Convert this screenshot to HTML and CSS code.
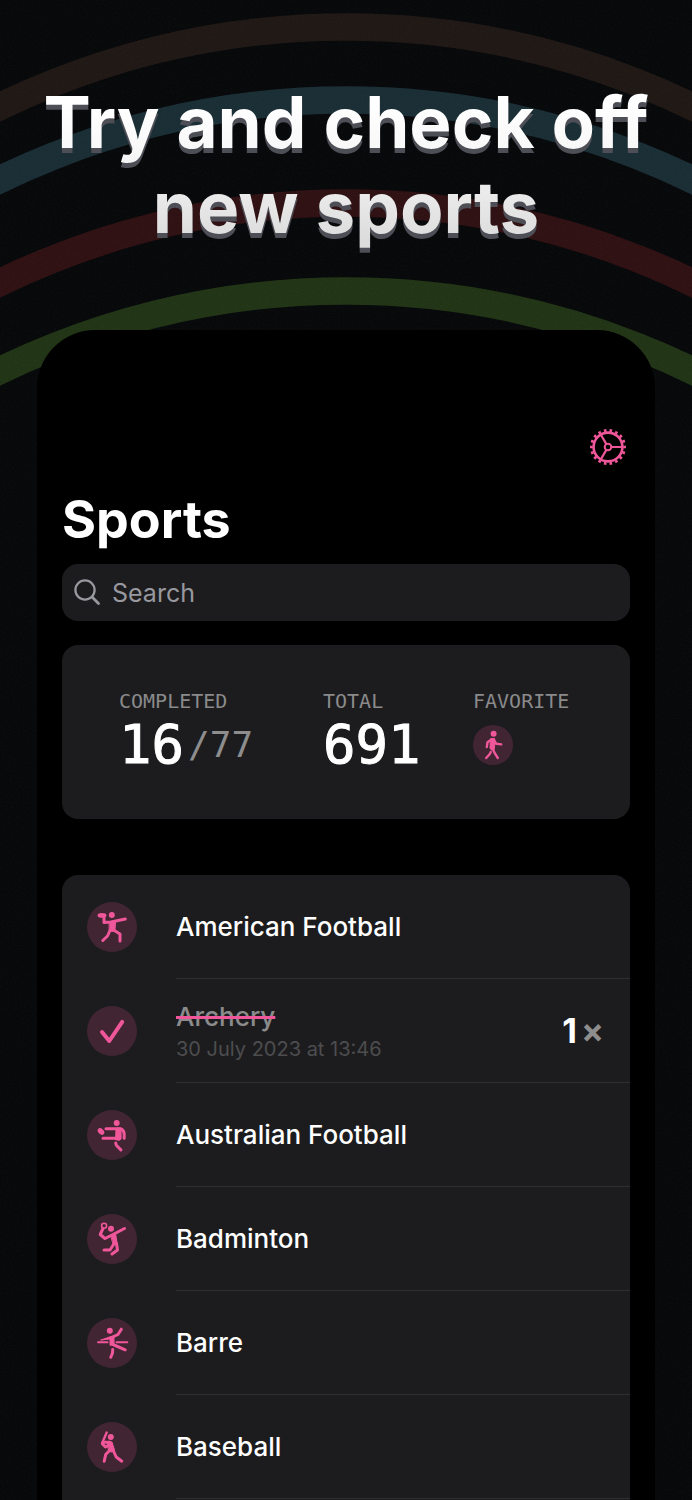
FILE: index.html
```html
<!DOCTYPE html>
<html lang="en">
<head>
<meta charset="utf-8">
<meta name="viewport" content="width=device-width, initial-scale=1">
<title>Sports</title>
<link rel="stylesheet" href="styles.css">
</head>
<body>
<div class="page">
  <svg class="arcs" viewBox="0 0 692 400" aria-hidden="true">
    <g fill="none" stroke-width="27.5">
      <circle cx="346" cy="820" r="793" stroke="#1e1613"/>
      <circle cx="346" cy="893" r="793" stroke="#182c33"/>
      <circle cx="346" cy="996" r="793" stroke="#2e0f11"/>
      <circle cx="346" cy="1084" r="793" stroke="#1f3314"/>
    </g>
  </svg>
  <svg class="grain" aria-hidden="true">
    <filter id="grain"><feTurbulence type="fractalNoise" baseFrequency="0.6" numOctaves="2"/><feColorMatrix type="saturate" values="0"/></filter>
    <rect width="100%" height="100%" filter="url(#grain)"/>
  </svg>

  <h1 class="headline">Try and check off<br>new sports</h1>

  <main class="phone">
    <div class="toolbar">
      <button class="gear" type="button" aria-label="Settings">
        <svg viewBox="0 0 36 36" fill="none" stroke="currentColor">
          <circle cx="18" cy="18" r="14.4" stroke-width="2.6"/>
          <circle cx="18" cy="18" r="16.6" stroke-width="2.8" pathLength="180" stroke-dasharray="4.6 5.4" stroke-dashoffset="2.3"/>
          <circle cx="18" cy="18" r="3.3" stroke-width="2"/>
          <path stroke-width="2.2" d="M21.5 18H33M16.2 14.9 10.6 5.2M16.2 21.1 10.6 30.8"/>
        </svg>
      </button>
    </div>
    <h2 class="title">Sports</h2>

    <label class="search">
      <svg viewBox="0 0 28 28" fill="none" stroke="currentColor" stroke-linecap="round" aria-hidden="true">
        <circle cx="11" cy="11" r="9.6" stroke-width="2.3"/>
        <path d="m18.3 18.3 6.2 6.2" stroke-width="2.8"/>
      </svg>
      <input type="search" placeholder="Search" aria-label="Search">
    </label>

    <dl class="stats">
      <div class="stat">
        <dt>COMPLETED</dt>
        <dd>16<small>/77</small></dd>
      </div>
      <div class="stat">
        <dt>TOTAL</dt>
        <dd>691</dd>
      </div>
      <div class="stat">
        <dt>FAVORITE</dt>
        <dd>
          <svg class="badge badge-small" viewBox="0 0 40 40" role="img" aria-label="Walking">
            <circle class="disc" cx="20" cy="20" r="20"/>
            <g class="limbs limbs-small">
              <circle class="solid" cx="20.6" cy="8.7" r="3"/>
              <path d="M18.5 14.5 14.5 17.3 13.8 22M21 15l2.3 3.8 5 .6M20 24l1.3 3.3L24.8 33M17.8 27l-1 2L13.2 33"/>
              <path class="solid" d="M18 13.5h3.6l.4 4-.7 6.5-2.2 1.5-2.1-2 .2-5z" stroke-width="1"/>
            </g>
          </svg>
        </dd>
      </div>
    </dl>

    <ul class="list">
      <li class="row">
        <svg class="badge" viewBox="0 0 50 50" aria-hidden="true">
          <circle class="disc" cx="25" cy="25" r="25"/>
          <g class="limbs">
            <circle class="solid" cx="24.8" cy="13.1" r="3"/>
            <ellipse class="solid" cx="15" cy="13.4" rx="4.4" ry="2.4"/>
            <path d="M17 15.5V20.5L24 20 38.3 17M23 28.5 20.5 34 15.8 38.5M26.5 28 33 32V39"/>
            <path class="solid" d="M22.5 20h6l-.5 7.5-2 2-3.5-.5z" stroke-width="1"/>
          </g>
        </svg>
        <div class="cell"><span class="name">American Football</span></div>
      </li>
      <li class="row">
        <svg class="badge" viewBox="0 0 50 50" role="img" aria-label="Done">
          <circle class="disc" cx="25" cy="25" r="25"/>
          <path class="tick" d="M15 26 22.3 35 35.2 15.8"/>
        </svg>
        <div class="cell">
          <div class="text"><del class="name">Archery</del><time class="date" datetime="2023-07-30T13:46">30 July 2023 at 13:46</time></div>
          <span class="count">1<span class="times">×</span></span>
        </div>
      </li>
      <li class="row">
        <svg class="badge" viewBox="0 0 50 50" aria-hidden="true">
          <circle class="disc" cx="25" cy="25" r="25"/>
          <g class="limbs">
            <circle class="solid" cx="29.7" cy="12.9" r="3"/>
            <ellipse class="solid" cx="14" cy="21.5" rx="3.8" ry="2.6" transform="rotate(42 14 21.5)"/>
            <path d="M19 18.7H33.5Q37 20 37.2 24V28.2M16 28.2H31M28.7 33l.6 2.2 4.6 4.7"/>
            <path class="solid" d="M29.5 18.5h4l.2 10-1.7 1.3-3-.5z" stroke-width="2"/>
          </g>
        </svg>
        <div class="cell"><span class="name">Australian Football</span></div>
      </li>
      <li class="row">
        <svg class="badge" viewBox="0 0 50 50" aria-hidden="true">
          <circle class="disc" cx="25" cy="25" r="25"/>
          <g class="limbs">
            <circle cx="17.1" cy="11.7" r="2.5" stroke-width="1.6"/>
            <circle class="solid" cx="24" cy="14.8" r="3"/>
            <path d="M16 14.5 13.2 20.5 18 24.5 25 21 37.5 14.5M26.5 30.5 23 36H17M29.5 29.5 30.5 36 25 40"/>
            <path class="solid" d="m24 21.5 4.5-2 1.7 10-3.5 1.8z" stroke-width="1"/>
          </g>
        </svg>
        <div class="cell"><span class="name">Badminton</span></div>
      </li>
      <li class="row">
        <svg class="badge" viewBox="0 0 50 50" aria-hidden="true">
          <circle class="disc" cx="25" cy="25" r="25"/>
          <g class="limbs">
            <circle class="solid" cx="22.8" cy="12.8" r="3"/>
            <path d="M34.3 11.2 31 16.5 25.5 19M26 26.5 38.2 31.8M25.7 31.5 25.5 35 23.8 39.3"/>
            <path class="solid" d="m14 22 9-3.2 4-.5v8.5l-4 .5v-6z" stroke-width="1"/>
            <path d="M11 24.2H20.5M29.5 24.2H40.3" stroke-width="2"/>
          </g>
        </svg>
        <div class="cell"><span class="name">Barre</span></div>
      </li>
      <li class="row">
        <svg class="badge" viewBox="0 0 50 50" aria-hidden="true">
          <circle class="disc" cx="25" cy="25" r="25"/>
          <g class="limbs">
            <circle class="solid" cx="23.8" cy="14.9" r="3"/>
            <path d="M19.7 10.5 15 21.5" stroke-width="2.4"/>
            <path d="M16 20.3H23M15.5 22 18.5 25 23 22.5M23 28 18.7 32.5 17.2 39.3M26 28 29.2 35 34.8 39.2"/>
            <path class="solid" d="M20.5 20h4.5l2.5 8-2.5 2-3-.5z" stroke-width="1"/>
          </g>
        </svg>
        <div class="cell"><span class="name">Baseball</span></div>
      </li>
    </ul>
  </main>
</div>
</body>
</html>
```
FILE: styles.css
```css
* { box-sizing: border-box; }

body {
  margin: 0;
  background: #050608;
  color: #fff;
  font-family: Inter, "Liberation Sans", sans-serif;
}

.page {
  position: relative;
  display: flex;
  flex-direction: column;
  min-height: 100vh;
  overflow: hidden;
}

/* Decorative backdrop */
.arcs,
.grain {
  position: absolute;
  top: 0;
  left: 0;
  width: 100%;
}
.grain { height: 100%; opacity: 0.04; }

.headline {
  position: relative;
  margin: 0;
  padding: 80px 0 80px;
  font-size: 71px;
  line-height: 85px;
  font-weight: 700;
  font-variant-ligatures: none;
  text-align: center;
  color: transparent;
  background: linear-gradient(#fff 100px, #f8f8f8 150px, #dcdcdc 240px);
  background-clip: text;
  -webkit-background-clip: text;
  filter: drop-shadow(0 5px 0 #4e4e57);
}

.phone {
  position: relative;
  display: flex;
  flex-direction: column;
  flex: 1;
  margin: 0 37px;
  padding: 98px 25px 0;
  border-radius: 58px 58px 0 0;
  background: #000;
}

.toolbar { display: flex; justify-content: flex-end; padding-right: 3px; }
.gear {
  display: block;
  width: 38px;
  height: 38px;
  padding: 1px;
  border: 0;
  background: none;
  color: #f0579a;
}
.gear svg { display: block; width: 100%; }

.title {
  margin: 23px 0 13px;
  font-size: 52px;
  line-height: 62px;
  font-weight: 700;
}

.search {
  display: flex;
  align-items: center;
  gap: 10px;
  height: 57px;
  padding: 0 12px;
  border-radius: 16px;
  background: #1c1c1e;
  color: #98989f;
}
.search svg { width: 28px; height: 28px; }
.search input {
  flex: 1;
  min-width: 0;
  padding: 0;
  border: 0;
  outline: 0;
  background: none;
  color: #fff;
  font: 400 25px/32px Inter, "Liberation Sans", sans-serif;
}
.search input::placeholder { color: #98989f; opacity: 1; }

.stats {
  display: grid;
  grid-template-columns: 204fr 150fr 100fr;
  margin: 24px 0 56px;
  padding: 44px 57px 43px;
  border-radius: 16px;
  background: #1c1c1e;
  font-family: "DejaVu Sans Mono", monospace;
}
.stat dt {
  font-size: 20px;
  line-height: 25px;
  color: #8a8a8b;
}
.stat dd {
  display: flex;
  align-items: center;
  gap: 4px;
  height: 62px;
  margin: 0;
  font-size: 54px;
  line-height: 62px;
  -webkit-text-stroke: 1px currentColor;
}
.stat small {
  font-size: 36px;
  color: #8d8d8e;
  -webkit-text-stroke: 0;
}

.badge { display: block; flex: none; width: 50px; height: 50px; }
.badge-small { width: 40px; height: 40px; }
.disc { fill: #422532; }
.limbs {
  fill: none;
  stroke: #f0579a;
  stroke-width: 3;
  stroke-linecap: round;
  stroke-linejoin: round;
}
.limbs-small { stroke-width: 2.4; }
.solid { fill: #f0579a; }
circle.solid, ellipse.solid { stroke: none; }
.tick {
  fill: none;
  stroke: #f0579a;
  stroke-width: 4;
  stroke-linecap: round;
  stroke-linejoin: round;
}

.list {
  flex: 1;
  margin: 0;
  padding: 0;
  list-style: none;
  border-radius: 16px 16px 0 0;
  background: #1c1c1e;
}
.row {
  display: flex;
  align-items: center;
  gap: 39px;
  padding-left: 25px;
}
.cell {
  display: flex;
  align-items: center;
  justify-content: space-between;
  flex: 1;
  height: 104px;
  padding-right: 26px;
  border-bottom: 1px solid #2e2e30;
}
.text { display: flex; flex-direction: column; padding-top: 4px; }
.name { font-size: 26px; line-height: 32px; font-weight: 500; }
del.name {
  align-self: flex-start;
  color: #8b8b8c;
  text-decoration: line-through #f0579a 3px;
}
.date {
  font-size: 20px;
  line-height: 32px;
  color: #4d4d4f;
}
.count {
  display: flex;
  align-items: center;
  gap: 4px;
  font-size: 34px;
  line-height: 40px;
  font-weight: 700;
}
.times { color: #8d8d8e; font-weight: 700; }
```
